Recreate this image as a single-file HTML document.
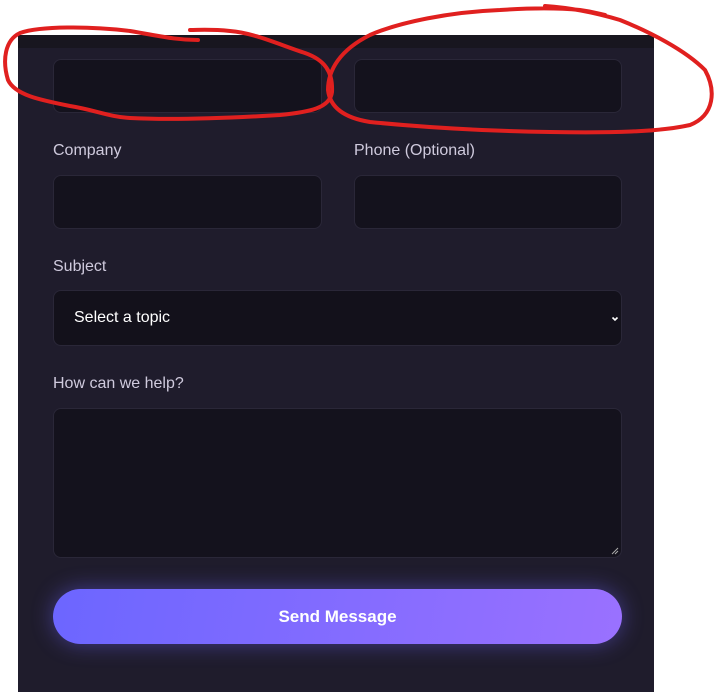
<!DOCTYPE html>
<html><head><meta charset="utf-8"><style>
html,body{margin:0;padding:0;background:#fff;width:717px;height:692px;overflow:hidden;font-family:"Liberation Sans",sans-serif;}
.panel{position:absolute;left:18px;top:35px;width:636px;height:657px;background:#1f1c2c;}
.band{position:absolute;left:0;top:0;width:100%;height:13px;background:#18161f;}
.f{position:absolute;background:#14121d;border:1px solid #2a2738;border-radius:8px;box-sizing:border-box;}
.l{position:absolute;color:#cfcadd;font-size:16px;}
.btn{position:absolute;left:35px;top:554px;width:569px;height:55px;border-radius:28px;background:linear-gradient(100deg,#6c66ff,#9a71ff);box-shadow:0 0 22px rgba(110,100,255,.45);color:#fff;font-weight:bold;font-size:17px;text-align:center;line-height:55px;}
</style></head><body>
<div class="panel">
<div class="band"></div>
<div class="f" style="left:35px;top:24px;width:269px;height:54px"></div>
<div class="f" style="left:336px;top:24px;width:268px;height:54px"></div>
<div class="l" style="left:35px;top:107px">Company</div>
<div class="l" style="left:336px;top:107px">Phone (Optional)</div>
<div class="f" style="left:35px;top:140px;width:269px;height:54px"></div>
<div class="f" style="left:336px;top:140px;width:268px;height:54px"></div>
<div class="l" style="left:35px;top:223px">Subject</div>
<div class="f" style="left:35px;top:255px;width:569px;height:56px;background:#13111b"><span style="position:absolute;left:20px;top:18px;color:#fff;font-size:16px">Select a topic</span><svg style="position:absolute;right:2px;top:24px" width="8" height="8" viewBox="0 0 8 8"><path d="M1.5 2.5L4 5L6.5 2.5" stroke="#fff" stroke-width="1.6" fill="none"/></svg></div>
<div class="l" style="left:35px;top:340px">How can we help?</div>
<div class="f" style="left:35px;top:373px;width:569px;height:150px"><svg style="position:absolute;right:2px;bottom:2px" width="8" height="8"><path d="M1 7L7 1M4 7L7 4" stroke="#aaa" stroke-width="1"/></svg></div>
<div class="btn">Send Message</div>
</div>
<svg style="position:absolute;left:0;top:0" width="717" height="692" fill="none" stroke="#e0201f" stroke-width="4" stroke-linecap="round" stroke-linejoin="round">
<path d="M198 40 C175 40 160 36 130 31 C90 26 40 26 20 33 C5 40 2 60 8 80 C15 95 40 100 70 106 C95 110 110 117 130 118 C170 120 230 118 280 115 C310 112 330 108 332 92 C333 72 325 60 305 53 C280 45 255 33 230 31 C210 29 200 30 190 30"/>
<path d="M545 6 C575 8 600 14 620 20 C650 32 685 50 705 70 C716 90 715 115 690 125 C660 132 610 133 550 132 C480 131 420 127 370 122 C345 118 330 108 328 90 C328 70 340 50 370 35 C400 22 450 12 500 10 C530 8 560 8 580 10 C595 12 600 14 605 15"/>
</svg>
</body></html>
